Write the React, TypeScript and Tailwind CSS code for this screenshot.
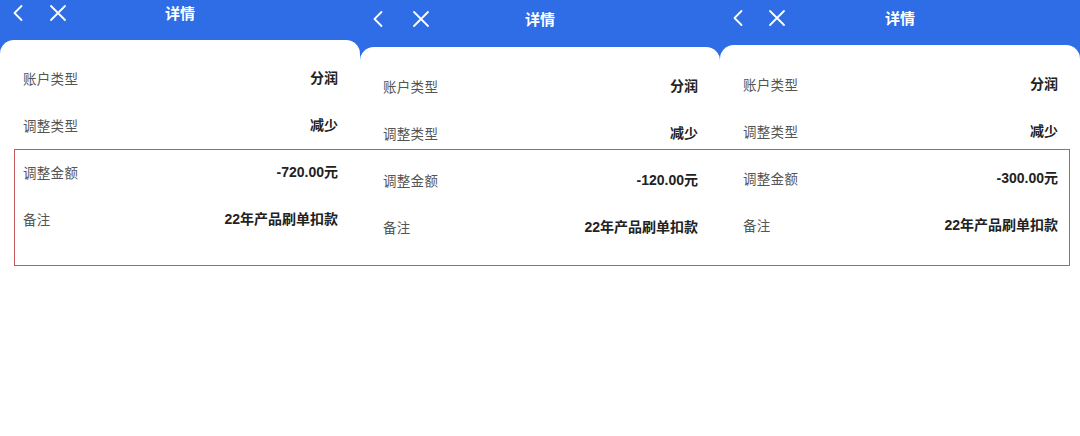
import React from "react";

type Row = { label: string; value: string };

const font = { fontFamily: '"Noto Sans CJK SC", "Noto Sans", sans-serif' };
const valueFont = { fontFamily: '"Liberation Sans", "Noto Sans CJK SC", sans-serif' };

function Chevron() {
  return (
    <svg width="12" height="18" viewBox="0 0 12 18" fill="none">
      <path d="M9.5 2 L2.5 9 L9.5 16" stroke="white" strokeWidth="1.8" strokeLinecap="round" strokeLinejoin="round" />
    </svg>
  );
}

function Cross() {
  return (
    <svg width="18" height="18" viewBox="0 0 18 18" fill="none">
      <path d="M2 2 L16 16 M16 2 L2 16" stroke="white" strokeWidth="1.8" strokeLinecap="round" />
    </svg>
  );
}

function Panel({
  rows,
  headerH,
  headerPad,
  cardPad,
  iconGap,
}: {
  rows: Row[];
  headerH: string;
  headerPad: string;
  cardPad: string;
  iconGap: string;
}) {
  return (
    <div className="flex flex-col w-[360px] h-full bg-[#2f6de6]" style={font}>
      <div className={`${headerH} ${headerPad} grid grid-cols-[1fr_auto_1fr] items-start px-3`}>
        <div className={`flex items-center ${iconGap} h-[20px]`}>
          <Chevron />
          <Cross />
        </div>
        <div className="text-white text-[15px] font-semibold leading-[20px]">详情</div>
        <div />
      </div>
      <div className={`flex-1 bg-white rounded-t-[14px] ${cardPad} pl-[23px] pr-[22px]`}>
        {rows.map((r) => (
          <div key={r.label} className="flex items-center justify-between h-[47px]">
            <span className="text-[13.5px] text-[#555] tracking-[0.3px]">{r.label}</span>
            <span className="text-[14px] font-bold text-[#222]" style={valueFont}>
              {r.value}
            </span>
          </div>
        ))}
      </div>
    </div>
  );
}

const base = (amount: string): Row[] => [
  { label: "账户类型", value: "分润" },
  { label: "调整类型", value: "减少" },
  { label: "调整金额", value: amount },
  { label: "备注", value: "22年产品刷单扣款" },
];

export default function App() {
  return (
    <div className="relative w-[1080px] h-[436px] overflow-hidden bg-white flex">
      <Panel rows={base("-720.00元")} headerH="h-[40px]" headerPad="pt-[3px]" cardPad="pt-[15px]" iconGap="gap-[25px]" />
      <Panel rows={base("-120.00元")} headerH="h-[47px]" headerPad="pt-[9px]" cardPad="pt-[16px]" iconGap="gap-[28px]" />
      <Panel rows={base("-300.00元")} headerH="h-[45px]" headerPad="pt-[8px]" cardPad="pt-[16px]" iconGap="gap-[24px]" />
      <div className="absolute left-[14px] top-[149px] w-[1056px] h-[117px] border-[1.5px] border-[#c45a5c] pointer-events-none" />
    </div>
  );
}
